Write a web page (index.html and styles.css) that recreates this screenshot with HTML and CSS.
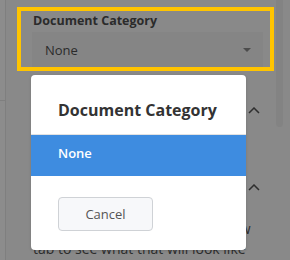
FILE: index.html
```html
<!doctype html>
<html>
  <head>
    <link rel="stylesheet" href="styles.css">
  </head>

  <body>
    <div class="app">
      <aside class="rail">
        <div class="rail-item"></div>
      </aside>

      <main class="panel">
        <div class="field highlight">
          <label class="field-label">Document Category</label>
          <div class="select">
            <span>None</span>
            <span class="caret"></span>
          </div>
        </div>

        <section class="group">
          <div class="group-head">
            <svg class="chevron" width="12" height="7" viewBox="0 0 12 7">
              <path d="M1 6 L6 1 L11 6" />
            </svg>
          </div>
        </section>

        <section class="group">
          <div class="group-head">
            <svg class="chevron" width="12" height="7" viewBox="0 0 12 7">
              <path d="M1 6 L6 1 L11 6" />
            </svg>
          </div>
          <p class="group-text">
            Pick a category and open Preview<br />
            tab to see what that will look like
          </p>
        </section>
      </main>

      <div class="scrollbar">
        <div class="thumb"></div>
      </div>
    </div>

    <div class="modal">
      <h2 class="modal-title">Document Category</h2>
      <ul class="options">
        <li class="option selected">None</li>
      </ul>
      <div class="modal-actions">
        <button type="button" class="btn">Cancel</button>
      </div>
    </div>
  </body>
</html>
```

FILE: styles.css
```css
/* CSS Reset */
*,
*::before,
*::after {
  box-sizing: border-box;
  margin: 0;
  padding: 0;
}

body {
  font-family: "Open Sans", "Liberation Sans", sans-serif;
  color: #2b2b2b;
  background-color: #898989;
  width: 290px;
  height: 260px;
  overflow: hidden;
  position: relative;
}

.app {
  display: flex;
  height: 260px;
}

/* left rail */
.rail {
  flex: none;
  width: 6px;
  background-color: #8c8c8c;
  border-right: 1px solid #7f7f7f;
}

.rail-item {
  height: 101px;
  border-bottom: 1px solid #7f7f7f;
}

/* main panel */
.panel {
  flex: 1;
  min-width: 0;
  padding: 7px 2px 0 11px;
}

.highlight {
  border: 4px solid #ffc400;
  height: 64px;
  padding: 1px 7px 0 11px;
  margin-bottom: 19px;
}

.field-label {
  display: block;
  font-size: 12.5px;
  font-weight: 700;
  line-height: 18px;
  padding-left: 1px;
  color: #2b2b2b;
}

.select {
  margin-top: 2px;
  height: 35px;
  background-color: #858585;
  display: flex;
  align-items: center;
  justify-content: space-between;
  padding: 0 12px 0 13px;
  font-size: 13px;
  color: #2b2b2b;
}

.caret {
  width: 0;
  height: 0;
  border-left: 4px solid transparent;
  border-right: 4px solid transparent;
  border-top: 4px solid #4c4c4c;
  margin-top: 1px;
}

.group-head {
  height: 40px;
  display: flex;
  align-items: center;
  justify-content: flex-end;
  padding: 0 14px 0 16px;
}

.group + .group {
  margin-top: 37px;
}

.chevron path {
  fill: none;
  stroke: #2e2e2e;
  stroke-width: 1.5;
}

.group-text {
  margin-top: 12px;
  padding-left: 16px;
  font-size: 14px;
  line-height: 20px;
  color: #2e2e2e;
}

/* scrollbar */
.scrollbar {
  flex: none;
  width: 14px;
}

.thumb {
  width: 7px;
  height: 127px;
  background-color: #838383;
  border-radius: 0 0 4px 4px;
}

/* modal dialog */
.modal {
  position: absolute;
  left: 31px;
  top: 75px;
  width: 215px;
  height: 175px;
  background-color: #fff;
  border-radius: 4px;
  box-shadow: 0 1px 3px rgba(0, 0, 0, 0.15);
  overflow: hidden;
}

.modal-title {
  font-size: 16px;
  font-weight: 700;
  line-height: 24px;
  color: #333;
  padding: 23px 0 12px 27px;
  border-bottom: 1px solid #e2e2e2;
}

.options {
  list-style: none;
}

.option {
  height: 41px;
  padding: 9px 27px 0;
  font-size: 13px;
  font-weight: 600;
  line-height: 18px;
}

.option.selected {
  background-color: #3e8ce0;
  color: #fff;
}

.modal-actions {
  padding: 21px 27px 0;
}

.btn {
  width: 95px;
  height: 34px;
  border: 1px solid #cfd2d6;
  border-radius: 4px;
  background-color: #f7f8fa;
  font-family: inherit;
  font-size: 13px;
  color: #555;
}
```
